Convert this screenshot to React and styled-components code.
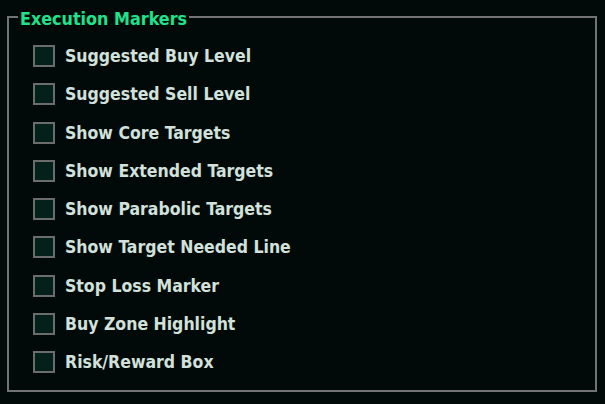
import React from 'react';
import styled, { createGlobalStyle } from 'styled-components';

const GlobalStyle = createGlobalStyle`
  html, body {
    margin: 0;
    padding: 0;
    background: #010a08;
  }
  body {
    font-family: 'DejaVu Sans Condensed', 'DejaVu Sans', 'Liberation Sans', sans-serif;
  }
`;

const Page = styled.div`
  width: 605px;
  height: 404px;
  box-sizing: border-box;
  padding: 6px 8px 0 7px;
  background: #010a08;
`;

const Group = styled.fieldset`
  width: 590px;
  height: 386px;
  box-sizing: border-box;
  margin: 0;
  padding: 0 0 0 24px;
  border: 2px solid #717472;
`;

const Title = styled.legend`
  margin-left: -15px;
  padding: 4px 2px 0;
  font-size: 17.8px;
  line-height: 18px;
  font-weight: 700;
  color: #1fe28c;
`;

const List = styled.ul`
  list-style: none;
  margin: 9px 0 0;
  padding: 0;
`;

const Row = styled.li`
  height: 38.25px;
  display: flex;
  align-items: center;
  gap: 10px;
`;

const Box = styled.span`
  width: 22px;
  height: 22px;
  box-sizing: border-box;
  border: 2px solid #6a6d6b;
  background: #03201b;
  flex-shrink: 0;
`;

const Label = styled.span`
  font-size: 17.5px;
  font-weight: 700;
  color: #d2e1dc;
  white-space: nowrap;
`;

const markers = [
  'Suggested Buy Level',
  'Suggested Sell Level',
  'Show Core Targets',
  'Show Extended Targets',
  'Show Parabolic Targets',
  'Show Target Needed Line',
  'Stop Loss Marker',
  'Buy Zone Highlight',
  'Risk/Reward Box',
];

export default function App() {
  return (
    <Page>
      <GlobalStyle />
      <Group>
        <Title>Execution Markers</Title>
        <List>
          {markers.map((m) => (
            <Row key={m}>
              <Box />
              <Label>{m}</Label>
            </Row>
          ))}
        </List>
      </Group>
    </Page>
  );
}
